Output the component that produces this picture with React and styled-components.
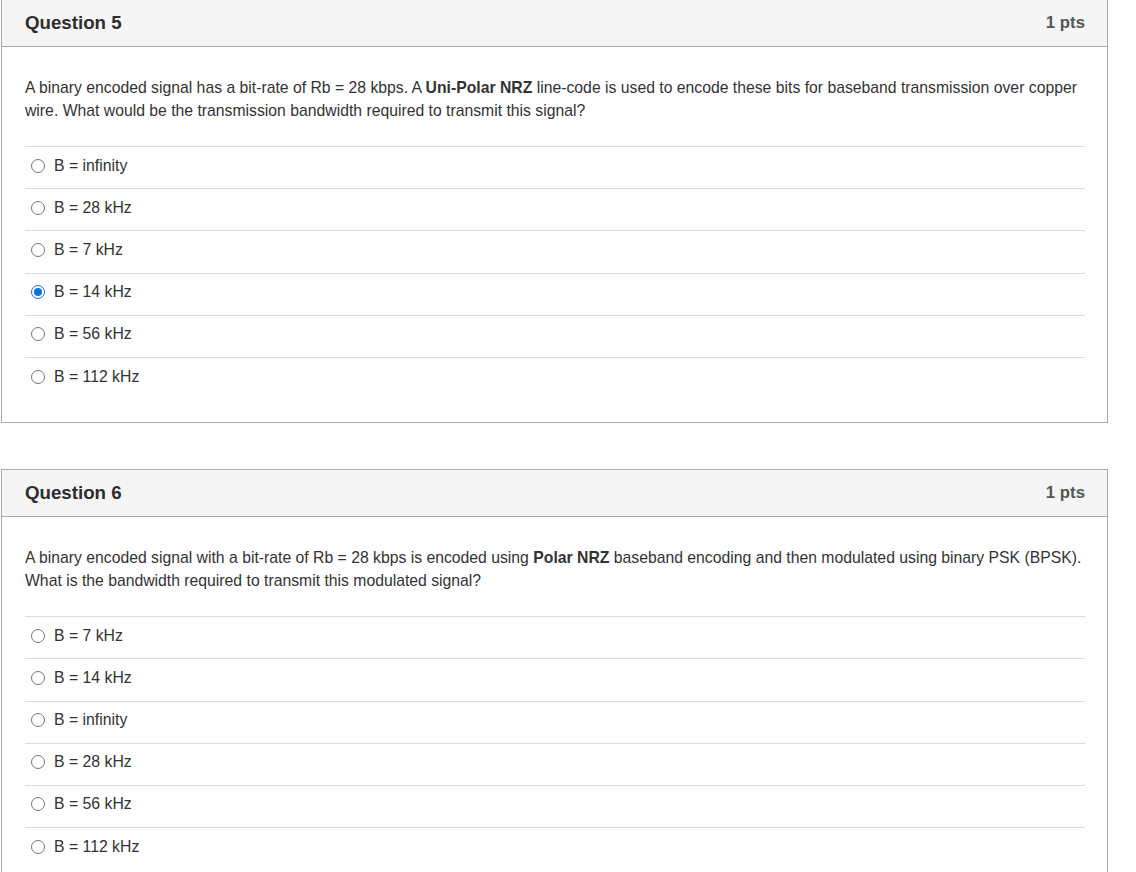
import React from 'react';
import styled, { createGlobalStyle } from 'styled-components';

const GlobalStyle = createGlobalStyle`
  body {
    margin: 0;
    background: #fff;
    font-family: "Liberation Sans", Arial, sans-serif;
    color: #333;
  }
`;

const Page = styled.div`
  padding: 0 0 0 1px;
  margin-top: -1px;
  width: 1107px;
  display: flex;
  flex-direction: column;
  gap: 46px;
`;

const Card = styled.div`
  border: 1px solid #aaa;
  background: #fff;
`;

const Header = styled.div`
  display: flex;
  justify-content: space-between;
  align-items: center;
  height: 46px;
  padding: 0 22px 0 23px;
  background: #f5f5f5;
  border-bottom: 1px solid #aaa;
`;

const Title = styled.h2`
  margin: 0;
  font-size: 18.7px;
  font-weight: bold;
  color: #2d2d2d;
`;

const Points = styled.span`
  font-size: 16.8px;
  font-weight: bold;
  color: #555;
`;

const Body = styled.div`
  padding: 29px 22px 23px 23px;
`;

const Text = styled.p`
  margin: 0 0 24px;
  font-size: 15.75px;
  line-height: 23px;
  color: #333;
`;

const Answers = styled.div`
  display: flex;
  flex-direction: column;
`;

const Answer = styled.label`
  display: flex;
  align-items: center;
  gap: 9px;
  box-sizing: border-box;
  height: 42.2px;
  padding: 0 0 4px 6px;
  border-top: 1px solid #dcdcdc;
  font-size: 15.8px;
  color: #333;
`;

const Radio = styled.span`
  width: 14px;
  height: 14px;
  box-sizing: border-box;
  border-radius: 50%;
  border: 1px solid ${p => (p.checked ? '#0b74e5' : '#767676')};
  background: #fff;
  display: flex;
  align-items: center;
  justify-content: center;
  flex-shrink: 0;
  &::after {
    content: '';
    width: 8px;
    height: 8px;
    border-radius: 50%;
    background: #0b74e5;
    display: ${p => (p.checked ? 'block' : 'none')};
  }
`;

const questions = [
  {
    id: 5,
    text: (
      <>
        A binary encoded signal has a bit-rate of Rb = 28 kbps. A <b>Uni-Polar NRZ</b> line-code is used to encode
        these bits for baseband transmission over copper wire. What would be the transmission bandwidth required to
        transmit this signal?
      </>
    ),
    answers: ['B = infinity', 'B = 28 kHz', 'B = 7 kHz', 'B = 14 kHz', 'B = 56 kHz', 'B = 112 kHz'],
    selected: 3,
  },
  {
    id: 6,
    text: (
      <>
        A binary encoded signal with a bit-rate of Rb = 28 kbps is encoded using <b>Polar NRZ</b> baseband encoding
        and then modulated using binary PSK (BPSK). What is the bandwidth required to transmit this modulated signal?
      </>
    ),
    answers: ['B = 7 kHz', 'B = 14 kHz', 'B = infinity', 'B = 28 kHz', 'B = 56 kHz', 'B = 112 kHz'],
    selected: -1,
  },
];

const App = () => (
  <>
    <GlobalStyle />
    <Page>
      {questions.map(q => (
        <Card key={q.id}>
          <Header>
            <Title>Question {q.id}</Title>
            <Points>1 pts</Points>
          </Header>
          <Body>
            <Text>{q.text}</Text>
            <Answers>
              {q.answers.map((a, i) => (
                <Answer key={a}>
                  <Radio checked={i === q.selected} />
                  {a}
                </Answer>
              ))}
            </Answers>
          </Body>
        </Card>
      ))}
    </Page>
  </>
);

export default App;
